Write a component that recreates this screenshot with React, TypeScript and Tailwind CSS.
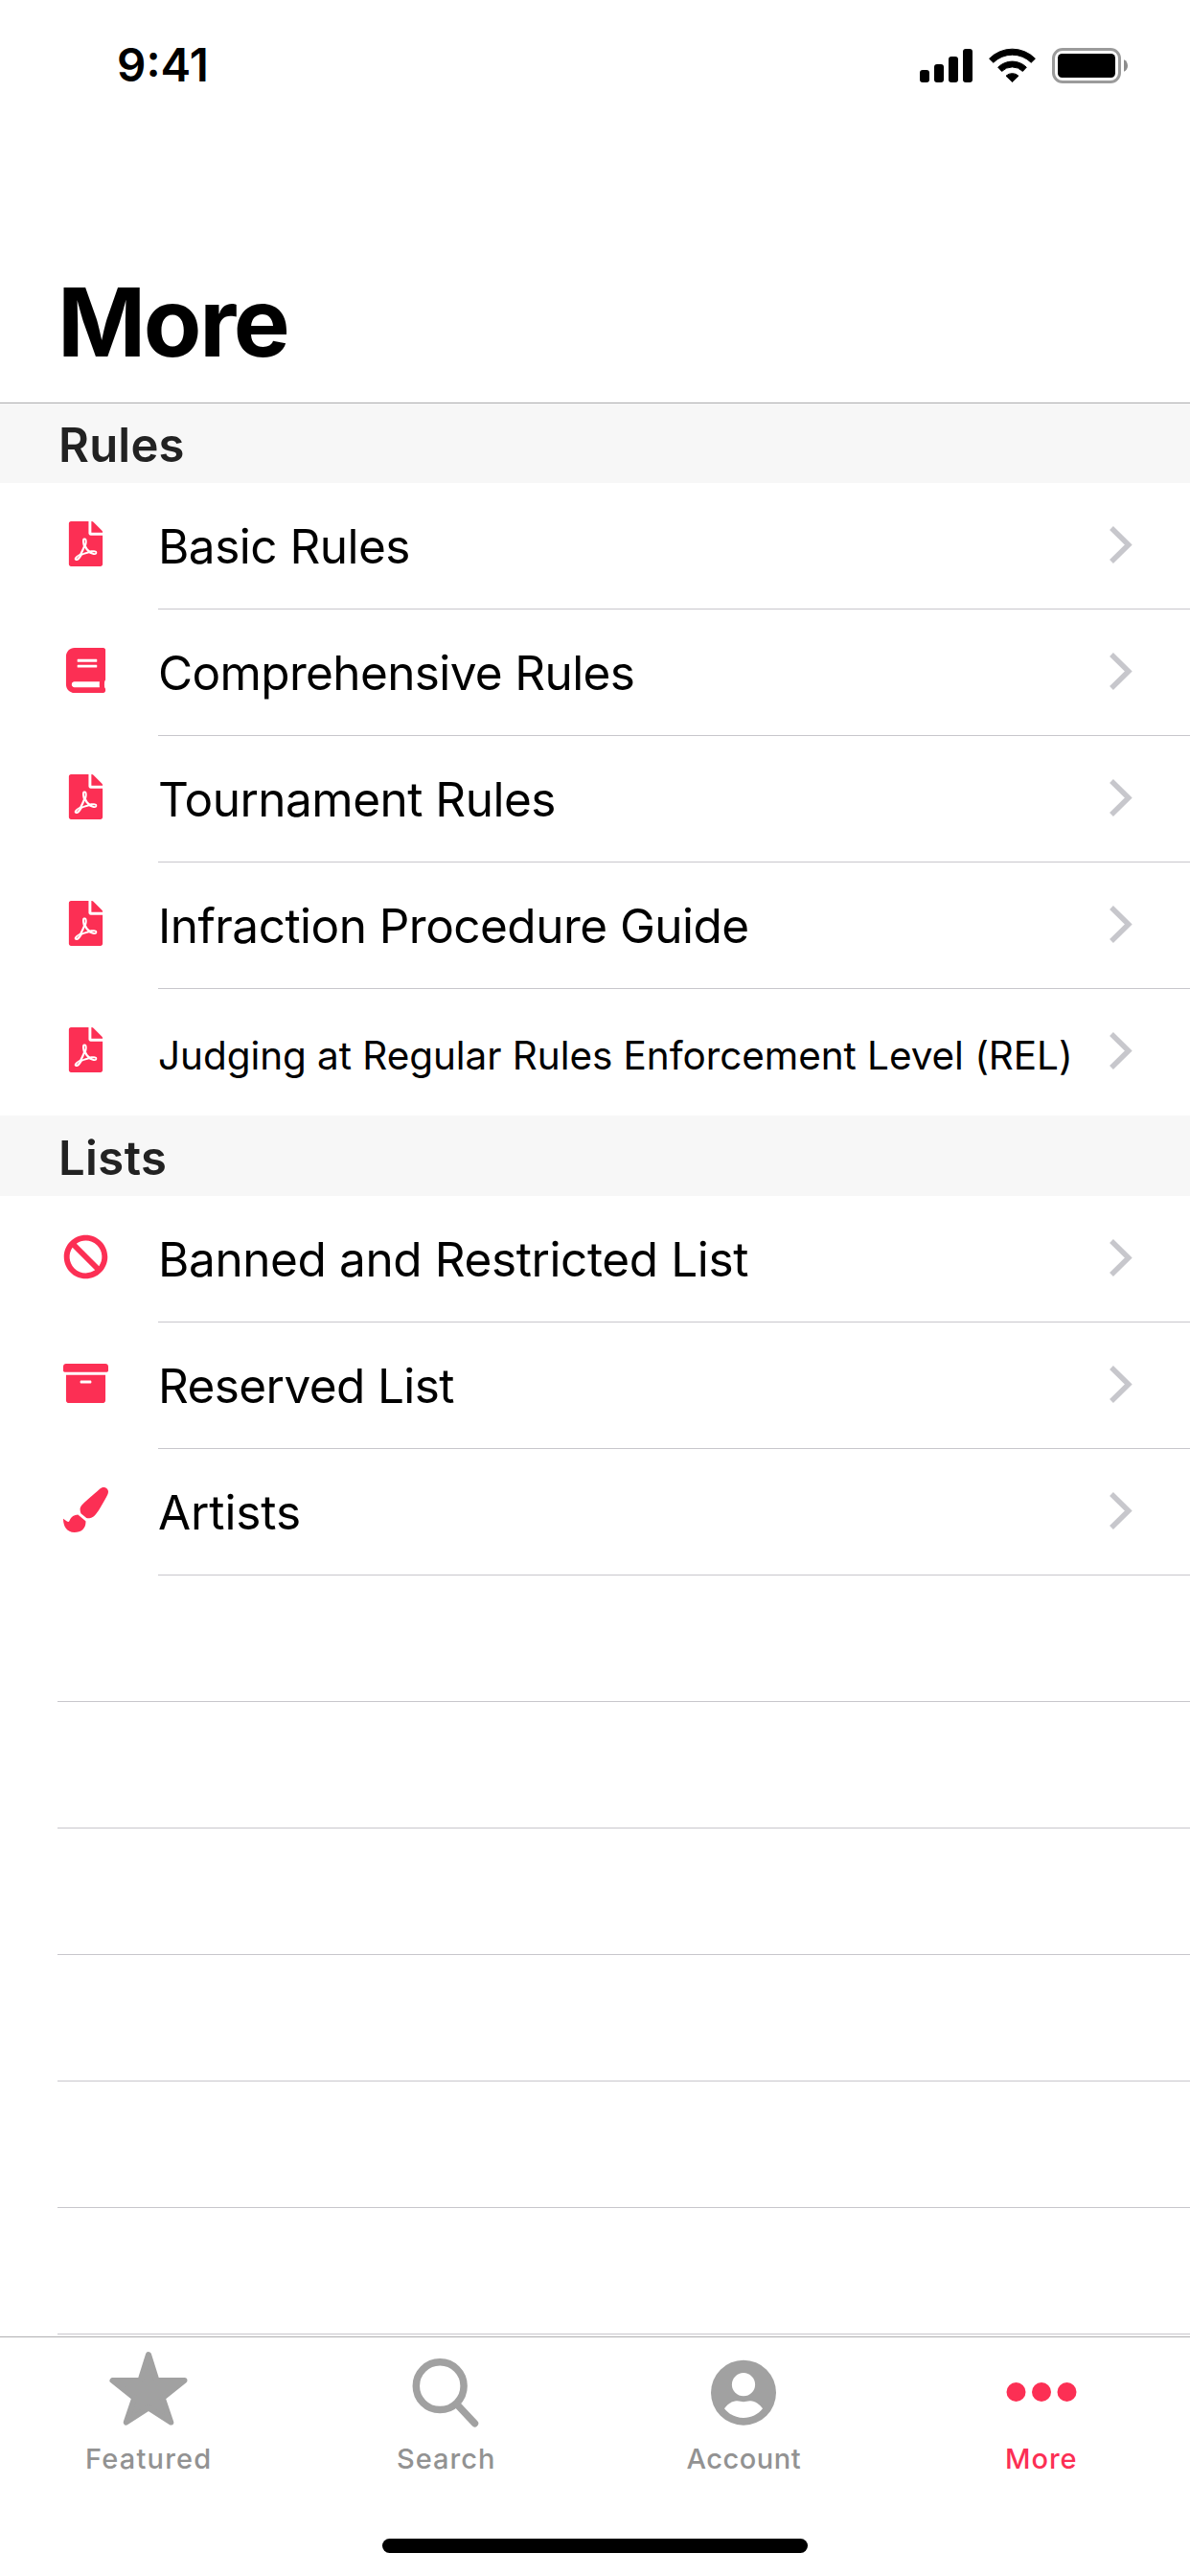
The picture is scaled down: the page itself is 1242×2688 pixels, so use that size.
import type { ReactNode } from "react";
import type { IconType } from "react-icons";
import { FaArchive, FaBan, FaBook, FaFilePdf, FaPaintBrush } from "react-icons/fa";

type Item = { label: string; icon: IconType; text: string };

const rules: Item[] = [
  { label: "Basic Rules", icon: FaFilePdf, text: "pt-px text-[49.5px] tracking-[-0.52px]" },
  { label: "Comprehensive Rules", icon: FaBook, text: "pt-px text-[49.5px] tracking-[-0.64px]" },
  { label: "Tournament Rules", icon: FaFilePdf, text: "pt-px text-[49.5px] tracking-[-0.52px]" },
  { label: "Infraction Procedure Guide", icon: FaFilePdf, text: "pt-px text-[49.5px] tracking-[-0.53px]" },
  {
    label: "Judging at Regular Rules Enforcement Level (REL)",
    icon: FaFilePdf,
    text: "pt-[8px] text-[40.5px] tracking-[-0.07px]",
  },
];

const lists: Item[] = [
  { label: "Banned and Restricted List", icon: FaBan, text: "pt-px text-[49.5px] tracking-[-0.39px]" },
  { label: "Reserved List", icon: FaArchive, text: "pt-px text-[49.5px] tracking-[-0.6px]" },
  { label: "Artists", icon: FaPaintBrush, text: "pt-px text-[49.5px] tracking-[-0.1px]" },
];

function StatusIcons() {
  return (
    <svg className="h-[37px] w-[217px]" viewBox="0 0 217 37" fill="none">
      <g fill="#000">
        <rect x="0" y="23" width="10" height="13" rx="3" />
        <rect x="15" y="17" width="10" height="19" rx="3" />
        <rect x="30" y="9" width="10" height="27" rx="3" />
        <rect x="45" y="1" width="10" height="35" rx="3" />
      </g>
      <g fill="#000" stroke="#000" strokeWidth="1" strokeLinejoin="round">
        <path d="M72.6 11.2A33.5 33.5 0 0 1 120.4 11.2L116.2 15.3A28 28 0 0 0 76.8 15.3Z" />
        <path d="M81.7 20.2A21 21 0 0 1 111.3 20.2L107.4 24.4A15.5 15.5 0 0 0 85.6 24.4Z" />
        <path d="M90 29.2A9.5 9.5 0 0 1 103 29.2L96.5 35.5Z" />
      </g>
      <rect x="139.5" y="1.5" width="69" height="34" rx="9.5" stroke="#9b9b9b" strokeWidth="3" />
      <rect x="144" y="6" width="60" height="25" rx="4.5" fill="#000" />
      <path d="M213 12.2C218.3 14.5 218.3 22.5 213 24.8Z" fill="#8c8c8c" />
    </svg>
  );
}

function Chevron() {
  return (
    <svg className="mb-[3px] h-[39px] w-[24px] shrink-0" viewBox="0 0 24 39" fill="none">
      <path d="M2 2L19.8 19.5L2 37" stroke="#c7c7cc" strokeWidth="5.5" />
    </svg>
  );
}

function SectionHeader({ title, tracking }: { title: string; tracking: string }) {
  return (
    <h2
      className={`h-[84px] bg-[#f7f7f7] pt-[3px] pl-[61px] text-[49px] leading-[83px] font-semibold text-[#222222] ${tracking}`}
    >
      {title}
    </h2>
  );
}

function Row({ item, line }: { item: Item; line: boolean }) {
  const Icon = item.icon;
  return (
    <li className="flex h-[132px] pl-[66px]">
      <div className="flex w-[99px] shrink-0 items-center">
        <Icon className="mb-[5px] h-[47px] w-[47px] text-[#fc2f54]" />
      </div>
      <div
        className={`flex flex-1 items-center justify-between border-b pr-[60px] ${line ? "border-[#c8c7cc]" : "border-transparent"}`}
      >
        <span className={`leading-[120px] whitespace-nowrap ${item.text}`}>{item.label}</span>
        <Chevron />
      </div>
    </li>
  );
}

function Tab({ label, text, children }: { label: string; text: string; children: ReactNode }) {
  return (
    <button className="flex flex-1 flex-col items-center pt-[11px]">
      <svg className="h-[84px] w-[84px]" viewBox="0 0 84 84" fill="none">
        {children}
      </svg>
      <span className={`mt-[12px] text-[29px] leading-[39px] font-medium ${text}`}>{label}</span>
    </button>
  );
}

export default function App() {
  return (
    <div className="flex h-[2688px] w-[1242px] flex-col overflow-hidden bg-white font-['Inter',sans-serif] text-black">
      <header className="flex h-[420px] shrink-0 flex-col">
        <div className="flex h-[136px] items-center justify-between pr-[65px] pl-[122px]">
          <span className="text-[47.5px] leading-[60px] font-semibold">9:41</span>
          <StatusIcons />
        </div>
        <h1 className="mt-[140px] pl-[60px] text-[99px] leading-[120px] font-bold tracking-[-2.4px]">More</h1>
      </header>

      <main className="flex-1 overflow-hidden">
        <section>
          <SectionHeader title="Rules" tracking="tracking-[0.2px] shadow-[inset_0_1px_0_#acacae]" />
          <ul>
            {rules.map((item, i) => (
              <Row key={item.label} item={item} line={i < rules.length - 1} />
            ))}
          </ul>
        </section>
        <section>
          <SectionHeader title="Lists" tracking="tracking-[0.4px]" />
          <ul>
            {lists.map((item) => (
              <Row key={item.label} item={item} line />
            ))}
          </ul>
        </section>
        {[0, 1, 2, 3, 4, 5].map((n) => (
          <div key={n} className="ml-[60px] h-[132px] border-b border-[#c8c7cc]" />
        ))}
      </main>

      <footer className="flex h-[250px] shrink-0 flex-col items-center justify-between border-t border-[#b0b0b2] pb-[24px]">
        <nav className="flex w-full">
          <Tab label="Featured" text="text-[#929292] tracking-[1.2px]">
            <path
              d="M42 7L50.5 34H79.5L56.7 52.2L65.3 77.6L42 62.4L18.7 77.6L27.3 52.2L4.5 34H33.5Z"
              fill="#a1a1a1"
              stroke="#a1a1a1"
              strokeWidth="6"
              strokeLinejoin="round"
            />
          </Tab>
          <Tab label="Search" text="text-[#929292] tracking-[1px]">
            <g stroke="#a1a1a1" strokeWidth="7.5" strokeLinecap="round">
              <circle cx="35.2" cy="39.7" r="24.9" />
              <path d="M53 59L71.5 78.8" />
            </g>
          </Tab>
          <Tab label="Account" text="text-[#929292] tracking-[0.5px]">
            <circle cx="42" cy="46.7" r="34" fill="#a1a1a1" />
            <g fill="#fff">
              <circle cx="42" cy="38.2" r="12.1" />
              <path d="M22 63.3C25 59 29.5 55.5 35 55.3C38 55.4 39.5 56.2 42 56.2C44.5 56.2 46 55.4 49 55.3C54.5 55.5 59 59 62 63.3C57 69.5 50 73 42 73C34 73 27 69.5 22 63.3Z" />
            </g>
          </Tab>
          <Tab label="More" text="text-[#fc2f54] tracking-[0.9px]">
            <g fill="#fc2f54">
              <circle cx="15.5" cy="46" r="10" />
              <circle cx="42" cy="46" r="10" />
              <circle cx="68.5" cy="46" r="10" />
            </g>
          </Tab>
        </nav>
        <div className="h-[15px] w-[444px] rounded-full bg-black" />
      </footer>
    </div>
  );
}
